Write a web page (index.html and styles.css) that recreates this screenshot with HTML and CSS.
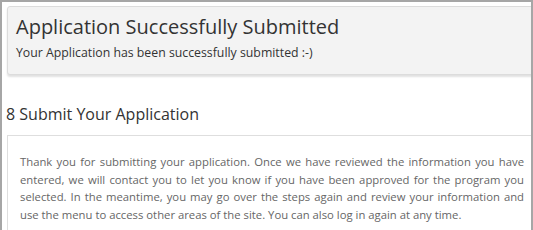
FILE: index.html
```html
<!DOCTYPE html>
<html lang="en">
<head>
    <meta charset="UTF-8">
    <title>Submit Your Application</title>
    <link rel="stylesheet" href="styles.css">
</head>
<body>
    <div class="frame">
        <div class="inner">
            <div class="alert">
                <h1>Application Successfully Submitted</h1>
                <p>Your Application has been successfully submitted :-)</p>
            </div>
            <h2 class="step-title">8 Submit Your Application</h2>
            <div class="panel">
                <p>Thank you for submitting your application. Once we have reviewed the information you have entered, we will contact you to let you know if you have been approved for the program you selected. In the meantime, you may go over the steps again and review your information and use the menu to access other areas of the site. You can also log in again at any time.</p>
            </div>
        </div>
    </div>
</body>
</html>
```

FILE: styles.css
```css
* { margin: 0; padding: 0; box-sizing: border-box; }
body {
    font-family: 'Open Sans', 'Liberation Sans', sans-serif;
    background: #fff;
    color: #333;
}
.frame {
    width: 533px;
    height: 230px;
    border: 2px solid #a6a6a6;
    border-bottom: none;
    overflow: hidden;
}
.inner {
    padding: 4px 0 0 5px;
    margin-right: -20px;
}
.alert {
    background: #f3f3f3;
    border: 1px solid #dcdcdc;
    border-radius: 3px;
    box-shadow: 0 2px 2px rgba(0,0,0,0.12);
    padding: 5px 8px 13px;
}
.alert h1 {
    font-size: 20px;
    font-weight: 400;
    color: #333;
    line-height: 30px;
}
.alert p {
    font-size: 12.3px;
    line-height: 16px;
    margin-top: 3px;
    color: #333;
}
.step-title {
    font-size: 16px;
    font-weight: 400;
    color: #333;
    margin: 28px 0 0 0;
    line-height: 22px;
    position: relative;
    left: -1px;
}
.panel {
    margin-top: 10px;
    border: 1px solid #dedede;
    padding: 17px 12px 15px;
    width: 560px;
}
.panel p {
    font-size: 11.3px;
    line-height: 17.7px;
    color: #666;
    text-align: justify;
    width: 504px;
}
```
